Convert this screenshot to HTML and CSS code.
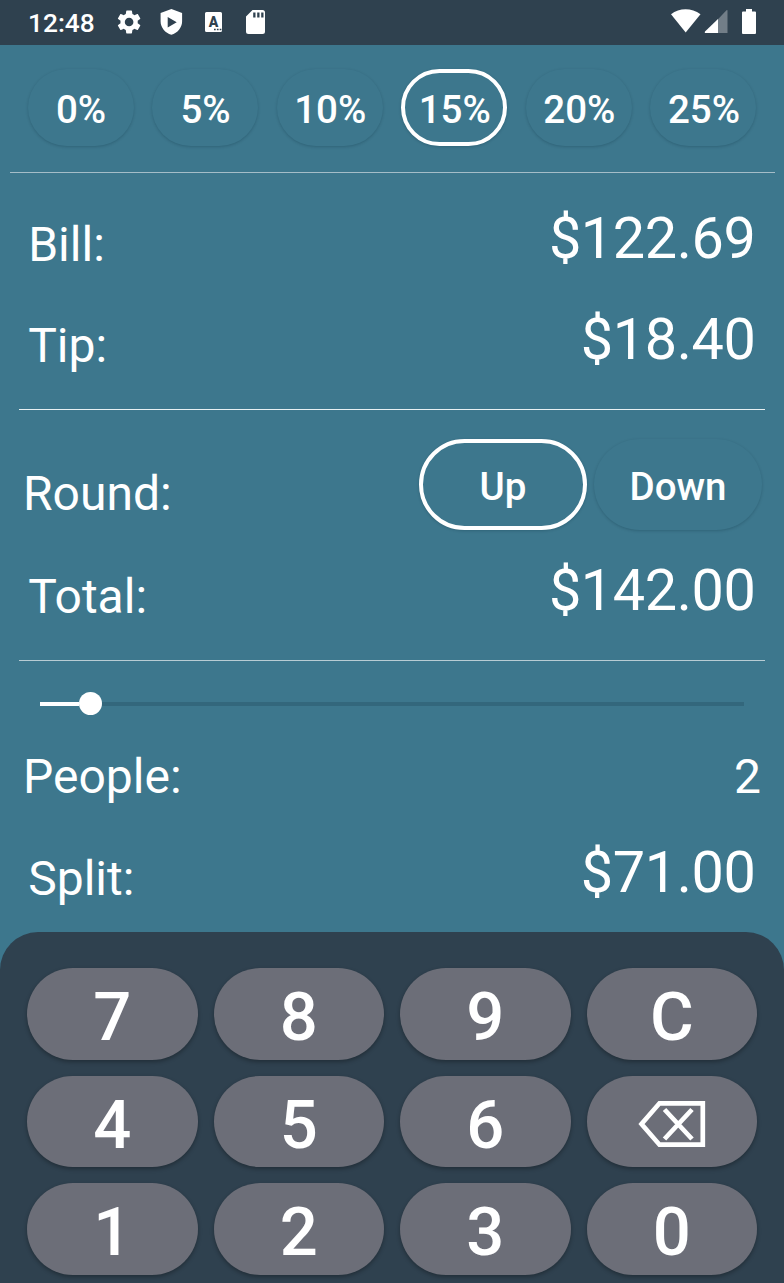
FILE: index.html
```html
<!DOCTYPE html>
<html lang="en">
<head>
<meta charset="utf-8">
<title>Tip Calculator</title>
<link rel="stylesheet" href="styles.css">
</head>
<body>
<header class="status">
  <span class="clock">12:48</span>
  <svg class="notices" width="150" height="45" viewBox="0 0 150 45" fill="#fff">
    <g transform="translate(4.7 7.6) scale(1.2)"><path d="M19.14 12.94c.04-.3.06-.61.06-.94 0-.32-.02-.64-.07-.94l2.03-1.58c.18-.14.23-.41.12-.61l-1.92-3.32c-.12-.22-.37-.29-.59-.22l-2.39.96c-.5-.38-1.03-.7-1.62-.94l-.36-2.54c-.04-.24-.24-.41-.48-.41h-3.84c-.24 0-.43.17-.47.41l-.36 2.54c-.59.24-1.13.57-1.62.94l-2.39-.96c-.22-.08-.47 0-.59.22L2.74 8.87c-.12.21-.08.47.12.61l2.03 1.58c-.05.3-.09.63-.09.94s.02.64.07.94l-2.03 1.58c-.18.14-.23.41-.12.61l1.92 3.32c.12.22.37.29.59.22l2.39-.96c.5.38 1.03.7 1.62.94l.36 2.54c.05.24.24.41.48.41h3.84c.24 0 .44-.17.47-.41l.36-2.54c.59-.24 1.13-.56 1.62-.94l2.39.96c.22.08.47 0 .59-.22l1.92-3.32c.12-.22.07-.47-.12-.61l-2.01-1.58zM12 15.6a3.6 3.6 0 1 1 0-7.2 3.6 3.6 0 0 1 0 7.2z"/></g>
    <path fill-rule="evenodd" d="M61.4 9l10.7 4v8.5c0 6-4.5 11.5-10.7 13.3-6.2-1.8-10.8-7.3-10.8-13.3V13zM57.7 17v10.5l9-5.3z"/>
    <path d="M96.500 12h14a1.500 1.500 0 0 1 1.500 1.500v17a1.500 1.500 0 0 1-1.500 1.500h-14a1.500 1.500 0 0 1-1.500-1.500v-17a1.500 1.500 0 0 1 1.500-1.500z"/>
    <text class="badge" x="98.700" y="27.300">A</text>
    <path fill="#2f414f" d="M104 28.700h1.700v1.500H104zm2.900 0h1.700v1.500h-1.700zm2.800 0h1.700v1.500h-1.700z"/>
    <path fill-rule="evenodd" d="M142.500 10h10a2.500 2.500 0 0 1 2.500 2.500v19a2.500 2.500 0 0 1-2.500 2.500h-14a2.500 2.500 0 0 1-2.500-2.500V16.500zM143.200 12.500v5h2.300v-5zm4 0v5h2.300v-5zm4 0v5h2.300v-5z"/>
  </svg>
  <svg class="signals" width="90" height="45" viewBox="0 0 90 45" fill="#fff">
    <path d="M1 14.300C9.500 7.500 21.500 7.500 30.500 14.300L15.700 32.500z"/>
    <path fill="#727e88" d="M56.500 10.200q1-.8 1 .6V33h-10V19.800z"/>
    <path d="M48 19v14H35q-.6-.6 0-1.400z"/>
    <path d="M76 9h6v2.500h3a1 1 0 0 1 1 1V33a1 1 0 0 1-1 1H73a1 1 0 0 1-1-1V12.500a1 1 0 0 1 1-1h3z"/>
  </svg>
</header>
<main>
  <div class="tips">
    <button class="pill">0%</button>
    <button class="pill">5%</button>
    <button class="pill">10%</button>
    <button class="pill selected">15%</button>
    <button class="pill">20%</button>
    <button class="pill">25%</button>
  </div>
  <section class="amounts">
    <div class="row"><span class="label">Bill:</span><span class="amount">$122.69</span></div>
    <div class="row"><span class="label">Tip:</span><span class="amount">$18.40</span></div>
  </section>
  <section class="totals">
    <div class="round">
      <span class="label">Round:</span>
      <button class="pill selected">Up</button>
      <button class="pill">Down</button>
    </div>
    <div class="row"><span class="label">Total:</span><span class="amount">$142.00</span></div>
  </section>
  <section class="split">
    <div class="slider"><span class="filled"></span><span class="thumb"></span><span class="track"></span></div>
    <div class="people"><span>People:</span><span>2</span></div>
    <div class="row"><span class="label">Split:</span><span class="amount">$71.00</span></div>
  </section>
</main>
<div class="keypad">
  <button class="key">7</button><button class="key">8</button><button class="key">9</button><button class="key">C</button>
  <button class="key">4</button><button class="key">5</button><button class="key">6</button>
  <button class="key" aria-label="Backspace">
    <svg class="erase" width="68" height="48" viewBox="0 0 68 48" fill="none" stroke="#fff" stroke-width="4.700"><path d="M21.500 3.300H64.800V44.700H21.500L3.500 24z"/><path d="M26.500 9.500L54 39M54 9.500L26.500 39"/></svg>
  </button>
  <button class="key">1</button><button class="key">2</button><button class="key">3</button><button class="key">0</button>
</div>
</body>
</html>
```
FILE: styles.css
```css
* { box-sizing: border-box; }
body {
  margin: 0;
  width: 784px;
  height: 1283px;
  overflow: hidden;
  display: flex;
  flex-direction: column;
  background: #3d778d;
  color: #fff;
  font-family: Roboto, sans-serif;
}
button {
  padding: 0;
  border: 0;
  color: inherit;
  font-family: inherit;
  font-weight: 500;
}
svg { display: block; overflow: visible; }

.status {
  height: 45px;
  flex: none;
  display: flex;
  background: #2f414f;
}
.clock {
  width: 82px;
  margin-left: 28px;
  font-size: 26.3px;
  font-weight: 500;
  line-height: 46px;
}
.signals { margin: 0 24px 0 auto; }
.badge { font-size: 14px; font-weight: 900; fill: #2f414f; }

main { height: 887px; flex: none; }
.tips {
  height: 128px;
  margin: 0 9.5px;
  padding: 24px 18px 0;
  display: flex;
  justify-content: space-between;
  border-bottom: 1px solid #a5bdc8;
}
.pill {
  background: #3d778d;
  border-radius: 46px;
  box-shadow: 0 1px 3px rgba(0, 30, 45, .22);
  font-size: 38.5px;
}
.tips .pill { width: 106px; height: 77px; padding: 3px 0 0 1px; }
.pill.selected { border: 4px solid #fff; }

.amounts, .totals {
  margin: 0 19px;
  border-bottom: 1px solid #b8ccd4;
}
.amounts { height: 237px; padding: 16px 10px 0; border-color: #e8f0f2; }
.totals { height: 251px; padding: 29px 0 0; }
.row {
  height: 101px;
  display: flex;
  justify-content: space-between;
  line-height: 101px;
}
.totals .row, .split .row { padding: 0 10px; }
.label { font-size: 48px; }
.row .label { padding-top: 6px; margin-left: -.8px; }
.amounts .label { padding-top: 5px; }
.amount { font-size: 57.6px; letter-spacing: -.4px; margin: -1px -.5px 0 0; }
.totals .amount, .split .amount { margin-top: 0; }
.round {
  height: 101px;
  display: flex;
  padding-right: 3px;
}
.round .label { margin: 0 auto 0 4px; line-height: 109px; }
.round .pill { width: 168px; height: 91px; margin-left: 7px; padding-top: 3px; }

.split { margin: 0 19px; }
.slider {
  height: 76px;
  padding: 9px 21px 0;
  display: flex;
  align-items: center;
}
.filled { width: 39px; height: 4px; background: #fff; }
.thumb { width: 23px; height: 23px; border-radius: 50%; background: #fff; }
.track { flex: 1; height: 4px; background: #33677c; }
.people {
  height: 85px;
  padding: 0 4px;
  display: flex;
  justify-content: space-between;
  font-size: 48px;
  line-height: 80px;
}
.split .row { line-height: 102px; }

.keypad {
  height: 351px;
  flex: none;
  display: grid;
  grid-template-columns: repeat(4, 1fr);
  grid-auto-rows: 91.5px;
  gap: 16px;
  padding: 36px 27px 0;
  border-radius: 38px 38px 0 0;
  background: #2f414f;
}
.key {
  display: flex;
  align-items: center;
  justify-content: center;
  padding: 7px 0 0;
  border-radius: 46px;
  background: #6c6e78;
  box-shadow: 0 2px 4px rgba(0, 0, 0, .3);
  font-size: 67px;
  line-height: 80px;
}
.erase { margin-top: -2px; }
```
